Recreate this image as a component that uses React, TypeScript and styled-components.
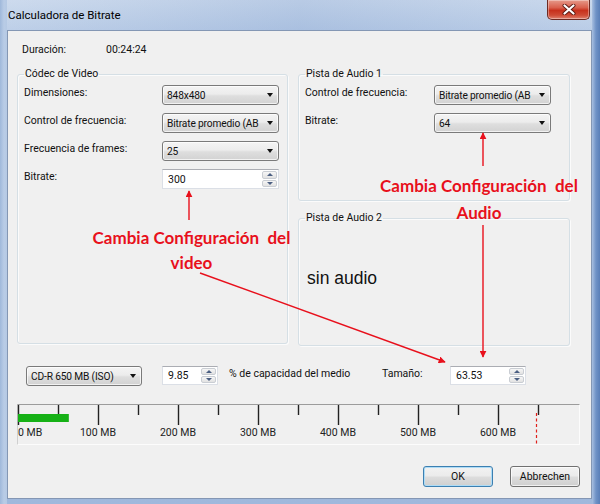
import React from 'react';
import styled, { createGlobalStyle } from 'styled-components';

const Global = createGlobalStyle`
  html, body { margin: 0; padding: 0; }
  body {
    width: 600px; height: 504px; overflow: hidden;
    font-family: Roboto, "Noto Sans", sans-serif;
    background: #a9c0e0;
  }
  #root { width: 600px; height: 504px; }
`;

const Window = styled.div`
  width: 600px;
  height: 504px;
  box-sizing: border-box;
  display: flex;
  flex-direction: column;
  padding: 0 8px 5px 7px;
  background:
    linear-gradient(90deg, #9fb8da 0px, #b9cce6 4px, #b5c9e4 7px, transparent 7px, transparent 592px, #a8bfe0 592px, #6f92c6 596px, #5a7fb8 600px),
    linear-gradient(180deg, #c4d4ea 0%, #b2c7e4 6%, #a7bfe1 60%, #9fb8dc 100%);
`;

const TitleBar = styled.div`
  height: 30px;
  flex: none;
  display: flex;
  align-items: flex-start;
  background: linear-gradient(90deg, rgba(255,255,255,0.15), rgba(120,150,200,0.15) 50%, rgba(255,255,255,0.1));
`;

const Title = styled.span`
  margin: 8px 0 0 1px;
  font-size: 11.5px;
  line-height: 14px;
  color: #000;
`;

const CloseButton = styled.div`
  margin-left: auto;
  margin-right: 2px;
  width: 43px;
  height: 20px;
  box-sizing: border-box;
  border: 1px solid #6d2a22;
  border-top: none;
  border-radius: 0 0 5px 5px;
  background: linear-gradient(180deg, #e69a8a 0%, #d9604d 40%, #c7301c 55%, #cf4a34 80%, #df8270 100%);
  display: flex;
  align-items: center;
  justify-content: center;
  box-shadow: inset 0 0 0 1px rgba(255,255,255,0.35);
`;

const Client = styled.div`
  flex: 1;
  position: relative;
  display: flex;
  flex-direction: column;
  background: #f0f0f0;
  border: 1px solid #8497b4;
  font-size: 10.5px;
  color: #111;
`;

const DurationRow = styled.div`
  height: 36px;
  display: flex;
  align-items: center;
  padding-left: 14px;
`;

const DurLabel = styled.span`
  width: 84px;
`;

const Panels = styled.div`
  display: grid;
  grid-template-columns: 271px 272px;
  column-gap: 10px;
  margin-left: 9px;
  height: 279px;
  align-items: start;
`;

const Column = styled.div`
  display: flex;
  flex-direction: column;
  gap: 10px;
`;

const Group = styled.fieldset<{ $h: number }>`
  margin: 0;
  min-width: 0;
  box-sizing: border-box;
  height: ${p => p.$h}px;
  padding: 4px 6px 0 6px;
  border: 1px solid #d5dfe5;
  border-radius: 3px;
  box-shadow: 1px 1px 0 #fbfbfb, inset 1px 1px 0 #fbfbfb;
`;

const Legend = styled.legend`
  padding: 0 1px;
  margin-left: 0;
  line-height: 14px;
  font-size: 10.5px;
`;

const Row = styled.div`
  display: flex;
  align-items: flex-start;
  height: 20px;
  margin-bottom: 8px;
`;

const RowLabel = styled.span<{ $w: number }>`
  width: ${p => p.$w}px;
  flex: none;
  padding-top: 1px;
  line-height: 14px;
`;

const Combo = styled.div<{ $w: number }>`
  width: ${p => p.$w}px;
  height: 20px;
  flex: none;
  box-sizing: border-box;
  display: flex;
  align-items: center;
  padding: 0 5px 0 4px;
  border: 1px solid #7a7a7a;
  border-radius: 3px;
  background: linear-gradient(180deg, #f4f4f4 0%, #ececec 45%, #dedede 55%, #d2d2d2 100%);
  box-shadow: inset 0 0 0 1px rgba(255,255,255,0.7);
  overflow: hidden;
`;

const ComboText = styled.span`
  flex: 1;
  min-width: 0;
  white-space: nowrap;
  font-size: 10.2px;
  letter-spacing: -0.15px;
`;

const ComboArrow = styled.span`
  flex: none;
  width: 0;
  height: 0;
  margin-left: 2px;
  border-left: 3.5px solid transparent;
  border-right: 3.5px solid transparent;
  border-top: 4px solid #111;
`;

const Spin = styled.div<{ $w: number; $h: number; $ml?: number }>`
  width: ${p => p.$w}px;
  height: ${p => p.$h}px;
  margin-left: ${p => p.$ml ?? 0}px;
  flex: none;
  box-sizing: border-box;
  display: flex;
  background: #fff;
  border: 1px solid #dbdfe6;
  border-top-color: #abadb3;
`;

const SpinText = styled.span`
  flex: 1;
  padding-left: 5px;
  display: flex;
  align-items: center;
`;

const SpinButtons = styled.div`
  width: 15px;
  display: flex;
  flex-direction: column;
  gap: 1px;
  padding: 1px;
  background: #fff;
`;

const SpinHalf = styled.div<{ $down?: boolean }>`
  flex: 1;
  display: flex;
  align-items: center;
  justify-content: center;
  border: 1px solid #c9cdd3;
  border-radius: 2px;
  background: linear-gradient(180deg, #f6f6f6, #e2e2e2);
  &::after {
    content: '';
    width: 0; height: 0;
    border-left: 3px solid transparent;
    border-right: 3px solid transparent;
    ${p => p.$down ? 'border-top: 3px solid #4b5f82;' : 'border-bottom: 3px solid #4b5f82;'}
  }
`;

const SinAudio = styled.div`
  margin: 39px 0 0 2px;
  font-family: "Liberation Sans", Arial, sans-serif;
  font-size: 17.5px;
  line-height: 20px;
  color: #111;
`;

const BottomRow = styled.div`
  margin-top: 20px;
  height: 20px;
  display: flex;
  align-items: flex-start;
  padding-left: 18px;
`;

const InlineLabel = styled.span<{ $w: number; $ml: number }>`
  width: ${p => p.$w}px;
  margin-left: ${p => p.$ml}px;
  flex: none;
  line-height: 14px;
  padding-top: 1px;
`;

const RulerBox = styled.div`
  margin: 18px 0 0 9px;
  width: 563px;
  height: 41px;
  box-sizing: border-box;
  border-top: 1px solid #9c9c9c;
  border-left: 1px solid #cfcfcf;
  border-bottom: 1px solid #fcfcfc;
  border-right: 1px solid #fcfcfc;
`;

const RulerSvg = styled.svg`
  display: block;
  overflow: visible;
`;

const ButtonRow = styled.div`
  margin-top: 21px;
  display: flex;
  justify-content: flex-end;
  gap: 17px;
  padding-right: 11px;
`;

const Button = styled.div<{ $default?: boolean }>`
  width: 70px;
  height: 21px;
  box-sizing: border-box;
  display: flex;
  align-items: center;
  justify-content: center;
  border: 1px solid ${p => (p.$default ? '#3c7fb1' : '#707070')};
  border-radius: 3px;
  background: linear-gradient(180deg, #f2f2f2 0%, #ebebeb 48%, #dddddd 52%, #cfcfcf 100%);
  box-shadow: inset 0 0 0 1px ${p => (p.$default ? '#aedcf6' : 'rgba(255,255,255,0.7)')};
  font-size: 10.5px;
`;

const Overlay = styled.svg`
  position: absolute;
  left: 0;
  top: 0;
  width: 100%;
  height: 100%;
  pointer-events: none;
`;

const Note = styled.div<{ $x: number; $y: number; $lh: number }>`
  position: absolute;
  left: ${p => p.$x}px;
  top: ${p => p.$y}px;
  transform: translateX(-50%);
  text-align: center;
  white-space: pre;
  font-family: Lato, "Open Sans", sans-serif;
  font-weight: 700;
  font-size: 17px;
  line-height: ${p => p.$lh}px;
  color: #e8101c;
`;

const ComboBox = ({ value, w }: { value: string; w: number }) => (
  <Combo $w={w}>
    <ComboText>{value}</ComboText>
    <ComboArrow />
  </Combo>
);

const SpinBox = ({ value, w, h = 20, ml }: { value: string; w: number; h?: number; ml?: number }) => (
  <Spin $w={w} $h={h} $ml={ml}>
    <SpinText>{value}</SpinText>
    <SpinButtons>
      <SpinHalf />
      <SpinHalf $down />
    </SpinButtons>
  </Spin>
);

const sizeMB = 63.53;
const pxPerMB = 0.8;

const Ruler = () => {
  const ticks = Array.from({ length: 14 }, (_, i) => i);
  return (
    <RulerBox>
      <RulerSvg width="561" height="39">
        {ticks.map(i => (
          <line
            key={i}
            x1={i * 40 + 0.5}
            x2={i * 40 + 0.5}
            y1={0}
            y2={i % 2 === 0 ? 20 : 10}
            stroke="#222"
            strokeWidth="1.4"
          />
        ))}
        <rect x={0} y={9} width={sizeMB * pxPerMB} height={8} fill="#16b116" />
        <line x1={518.5} x2={518.5} y1={8} y2={39} stroke="#e0201c" strokeWidth="1.2" strokeDasharray="3 2.5" />
        {[0, 100, 200, 300, 400, 500, 600].map(mb => (
          <text
            key={mb}
            x={mb === 0 ? 0 : mb * pxPerMB}
            y={31}
            textAnchor={mb === 0 ? 'start' : 'middle'}
            fontSize="10.5"
            fontFamily="Roboto, sans-serif"
            fill="#222"
          >
            {mb} MB
          </text>
        ))}
      </RulerSvg>
    </RulerBox>
  );
};

export default function App() {
  return (
    <>
      <Global />
      <Window>
        <TitleBar>
          <Title>Calculadora de Bitrate</Title>
          <CloseButton>
            <svg width="14" height="11" viewBox="0 0 14 11">
              <path d="M2.5 1.5 L11.5 9.5 M11.5 1.5 L2.5 9.5" stroke="#5a1a12" strokeWidth="4" strokeLinecap="round" />
              <path d="M2.5 1.5 L11.5 9.5 M11.5 1.5 L2.5 9.5" stroke="#fff" strokeWidth="2.2" strokeLinecap="round" />
            </svg>
          </CloseButton>
        </TitleBar>
        <Client>
          <DurationRow>
            <DurLabel>Duración:</DurLabel>
            <span>00:24:24</span>
          </DurationRow>
          <Panels>
            <Group $h={277}>
              <Legend>Códec de Video</Legend>
              <Row>
                <RowLabel $w={138}>Dimensiones:</RowLabel>
                <ComboBox value="848x480" w={117} />
              </Row>
              <Row>
                <RowLabel $w={138}>Control de frecuencia:</RowLabel>
                <ComboBox value="Bitrate promedio (AB" w={117} />
              </Row>
              <Row>
                <RowLabel $w={138}>Frecuencia de frames:</RowLabel>
                <ComboBox value="25" w={117} />
              </Row>
              <Row>
                <RowLabel $w={138}>Bitrate:</RowLabel>
                <SpinBox value="300" w={117} />
              </Row>
            </Group>
            <Column>
              <Group $h={134}>
                <Legend>Pista de Audio 1</Legend>
                <Row>
                  <RowLabel $w={129}>Control de frecuencia:</RowLabel>
                  <ComboBox value="Bitrate promedio (AB" w={117} />
                </Row>
                <Row>
                  <RowLabel $w={129}>Bitrate:</RowLabel>
                  <ComboBox value="64" w={117} />
                </Row>
              </Group>
              <Group $h={135}>
                <Legend>Pista de Audio 2</Legend>
                <SinAudio>sin audio</SinAudio>
              </Group>
            </Column>
          </Panels>
          <BottomRow>
            <ComboBox value="CD-R 650 MB (ISO)" w={116} />
            <SpinBox value="9.85" w={56} h={19} ml={20} />
            <InlineLabel $w={153} $ml={11}>% de capacidad del medio</InlineLabel>
            <InlineLabel $w={68} $ml={0}>Tamaño:</InlineLabel>
            <SpinBox value="63.53" w={76} h={19} />
          </BottomRow>
          <Ruler />
          <ButtonRow>
            <Button $default>OK</Button>
            <Button>Abbrechen</Button>
          </ButtonRow>

          <Overlay>
            <defs>
              <marker id="ah" viewBox="0 0 10 10" refX="9" refY="5" markerWidth="5" markerHeight="5" orient="auto-start-reverse">
                <path d="M0 0 L10 5 L0 10 Z" fill="#e8101c" />
              </marker>
            </defs>
            <line x1={475} y1={135} x2={475} y2={102} stroke="#e8101c" strokeWidth="1.4" markerEnd="url(#ah)" />
            <line x1={475} y1={194} x2={475} y2={326} stroke="#e8101c" strokeWidth="1.4" markerEnd="url(#ah)" />
            <line x1={181} y1={189} x2={181} y2={160} stroke="#e8101c" strokeWidth="1.4" markerEnd="url(#ah)" />
            <line x1={192} y1={242} x2={437} y2={331} stroke="#e8101c" strokeWidth="1.4" markerEnd="url(#ah)" />
          </Overlay>
          <Note $x={183.5} $y={194} $lh={25}>{'Cambia Configuración  del\nvideo'}</Note>
          <Note $x={471} $y={141} $lh={27}>{'Cambia Configuración  del\nAudio'}</Note>
        </Client>
      </Window>
    </>
  );
}
